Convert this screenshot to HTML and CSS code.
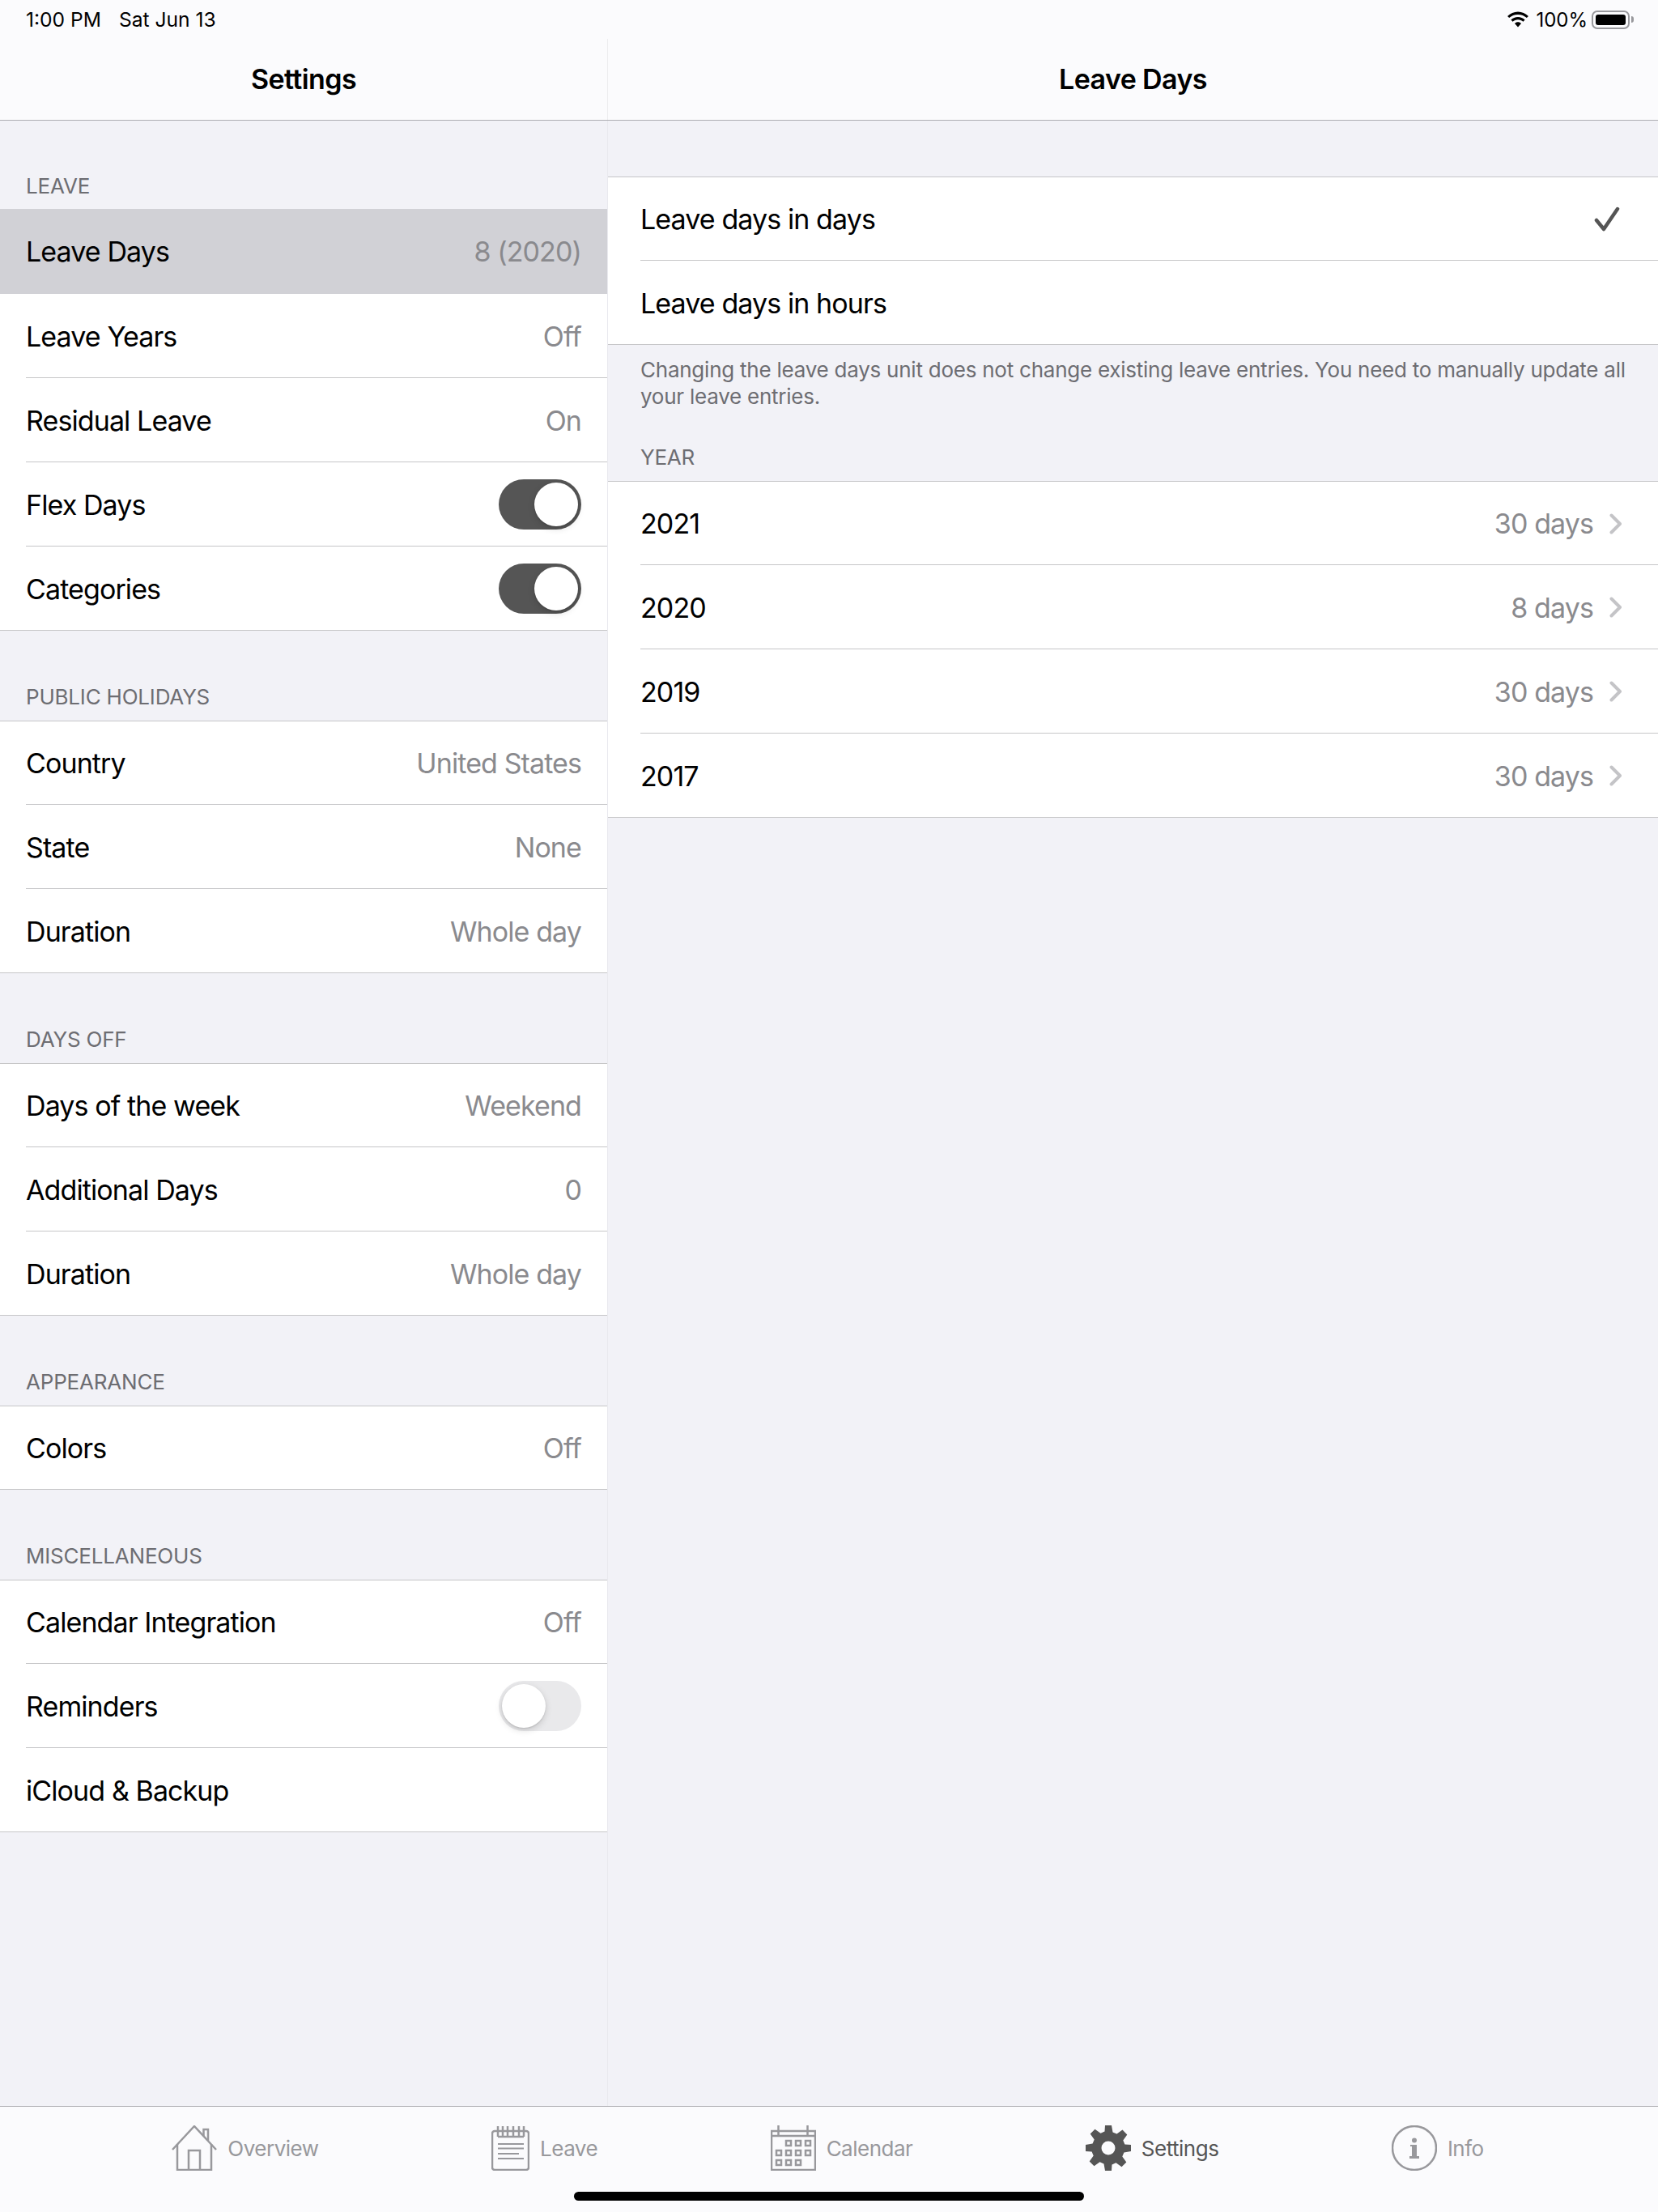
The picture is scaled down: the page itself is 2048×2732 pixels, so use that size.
FILE: index.html
```html
<!DOCTYPE html>
<html lang="en">
<head>
    <meta charset="UTF-8">
    <title>Settings</title>
    <link rel="stylesheet" href="styles.css">
</head>
<body>
    <div id="app">
        <div class="top-bar">
            <div class="status-bar">
                <div class="status-left"><span>1:00 PM</span><span>Sat Jun 13</span></div>
                <div class="status-right">
                    <svg class="wifi" width="28" height="20" viewBox="1 .5 26 19">
                        <path d="M14 4.200c4 0 7.600 1.500 10.300 4l2-2.100C23 3 18.700 1 14 1S5 3 1.700 6.100l2 2.100c2.700-2.500 6.300-4 10.300-4z"/>
                        <path d="M14 10.200c2.400 0 4.500.9 6.100 2.400l2.100-2.100C20 8.400 17.200 7.200 14 7.200s-6 1.200-8.200 3.300l2.100 2.100c1.600-1.500 3.700-2.400 6.100-2.400z"/>
                        <path d="M14 13.200c-1.500 0-2.800.6-3.800 1.500L14 19l3.800-4.300c-1-.9-2.300-1.500-3.800-1.500z"/>
                    </svg>
                    <span>100%</span>
                    <div class="battery"><div class="battery-fill"></div></div>
                    <div class="battery-nub"></div>
                </div>
            </div>
            <div class="nav-row">
                <div class="nav-title nav-left">Settings</div>
                <div class="nav-title nav-right">Leave Days</div>
            </div>
        </div>

        <div class="panes">
            <div class="pane-left">
                <div class="section-head first">LEAVE</div>
                <div class="group">
                    <div class="row selected"><span>Leave Days</span><span class="value">8 (2020)</span></div>
                    <div class="row"><span>Leave Years</span><span class="value">Off</span></div>
                    <div class="row"><span>Residual Leave</span><span class="value">On</span></div>
                    <div class="row"><span>Flex Days</span><div class="switch on"><div class="knob"></div></div></div>
                    <div class="row"><span>Categories</span><div class="switch on"><div class="knob"></div></div></div>
                </div>

                <div class="section-head">PUBLIC HOLIDAYS</div>
                <div class="group">
                    <div class="row"><span>Country</span><span class="value">United States</span></div>
                    <div class="row"><span>State</span><span class="value">None</span></div>
                    <div class="row"><span>Duration</span><span class="value">Whole day</span></div>
                </div>

                <div class="section-head">DAYS OFF</div>
                <div class="group">
                    <div class="row"><span>Days of the week</span><span class="value">Weekend</span></div>
                    <div class="row"><span>Additional Days</span><span class="value">0</span></div>
                    <div class="row"><span>Duration</span><span class="value">Whole day</span></div>
                </div>

                <div class="section-head">APPEARANCE</div>
                <div class="group">
                    <div class="row"><span>Colors</span><span class="value">Off</span></div>
                </div>

                <div class="section-head">MISCELLANEOUS</div>
                <div class="group">
                    <div class="row"><span>Calendar Integration</span><span class="value">Off</span></div>
                    <div class="row"><span>Reminders</span><div class="switch"><div class="knob"></div></div></div>
                    <div class="row"><span>iCloud &amp; Backup</span></div>
                </div>
            </div>

            <div class="pane-right">
                <div class="group first-group">
                    <div class="row">
                        <span>Leave days in days</span>
                        <svg class="check" width="32" height="32" viewBox="0 0 32 32"><path d="M3 17l9 11L29 3"/></svg>
                    </div>
                    <div class="row"><span>Leave days in hours</span></div>
                </div>
                <div class="group-note">Changing the leave days unit does not change existing leave entries. You need to manually update all your leave entries.</div>
                <div class="section-head year-head">YEAR</div>
                <div class="group">
                    <div class="row"><span>2021</span><div class="detail"><span class="value">30 days</span><svg class="chevron" width="16" height="26" viewBox="0 0 16 26"><path d="M2.500 2.500L13 13 2.500 23.500"/></svg></div></div>
                    <div class="row"><span>2020</span><div class="detail"><span class="value">8 days</span><svg class="chevron" width="16" height="26" viewBox="0 0 16 26"><path d="M2.500 2.500L13 13 2.500 23.500"/></svg></div></div>
                    <div class="row"><span>2019</span><div class="detail"><span class="value">30 days</span><svg class="chevron" width="16" height="26" viewBox="0 0 16 26"><path d="M2.500 2.500L13 13 2.500 23.500"/></svg></div></div>
                    <div class="row"><span>2017</span><div class="detail"><span class="value">30 days</span><svg class="chevron" width="16" height="26" viewBox="0 0 16 26"><path d="M2.500 2.500L13 13 2.500 23.500"/></svg></div></div>
                </div>
            </div>
        </div>

        <div class="tab-bar">
            <div class="tabs">
                <div class="tab">
                    <svg class="tab-line" width="56" height="56" viewBox="0 0 56 56">
                        <path d="M1 30L28 1 55 30"/>
                        <path d="M7 23v32h42V23"/>
                        <path d="M21 55V31h14v24"/>
                        <path d="M39.500 13V5H45v14"/>
                    </svg>
                    <span>Overview</span>
                </div>
                <div class="tab">
                    <svg class="tab-line" width="47" height="56" viewBox="0 0 47 56">
                        <rect x="1" y="7" width="45" height="48" rx="3"/>
                        <path d="M8 14h32M8 1v13M14 1v13M20 1v13M27 1v13M34 1v13M40 1v13"/>
                        <path class="thin" d="M8 23h32M8 28.500h32M8 35h26M8 41h32"/>
                    </svg>
                    <span>Leave</span>
                </div>
                <div class="tab">
                    <svg class="tab-line" width="56" height="56" viewBox="0 0 56 56">
                        <rect x="1" y="7" width="54" height="48"/>
                        <path d="M1 13h54M9.500 0v12M45.500 0v12"/>
                        <path d="M19 19h6v6h-6zM31 19h6v6h-6zM43 19h6v6h-6zM7 31h6v6H7zM19 31h6v6h-6zM31 31h6v6h-6zM43 31h6v6h-6zM7 43h6v6H7zM19 43h6v6h-6zM31 43h6v6h-6z"/>
                    </svg>
                    <span>Calendar</span>
                </div>
                <div class="tab active">
                    <svg width="56" height="56" viewBox="0 0 56 56">
                        <path fill-rule="evenodd" d="M24 0h8l1.500 8.500 5 2.100 7-5 5.800 5.800-5 7 2.100 5L56 24v8l-8.600 1.500-2.100 5 5 7-5.800 5.800-7-5-5 2.100L32 56h-8l-1.500-8.600-5-2.100-7 5-5.800-5.800 5-7-2.100-5L0 32v-8l8.600-1.500 2.100-5-5-7 5.800-5.800 7 5 5-2.100L24 0zm4 19.500a8.500 8.500 0 1 0 0 17 8.500 8.500 0 0 0 0-17z"/>
                    </svg>
                    <span>Settings</span>
                </div>
                <div class="tab">
                    <svg class="tab-line" width="56" height="56" viewBox="0 0 56 56">
                        <circle cx="28" cy="28" r="27"/>
                        <circle class="dot" cx="28" cy="18.500" r="3"/>
                        <path class="dot" d="M23 24h8v14h3v3H22v-3h3V26h-2z"/>
                    </svg>
                    <span>Info</span>
                </div>
            </div>
            <div class="home-bar"></div>
        </div>
    </div>
</body>
</html>
```

FILE: styles.css
```css
*{
    padding: 0;
    margin: 0;
    box-sizing: border-box;
}
body{
    font-family: Inter, "Liberation Sans", sans-serif;
    color: #000;
}
#app{
    width: 2048px;
    height: 2732px;
    display: flex;
    flex-direction: column;
    background-color: #f2f2f7;
}

/* top */
.top-bar{
    height: 149px;
    background-color: #fbfbfd;
    border-bottom: 1px solid #aeaeb2;
}
.status-bar{
    height: 48px;
    padding: 0 30px 0 32px;
    display: flex;
    justify-content: space-between;
    align-items: center;
    font-size: 24.600px;
}
.status-left{
    display: flex;
    gap: 22px;
}
.status-right{
    display: flex;
    align-items: center;
    font-size: 24px;
}
.wifi{
    margin-right: 8px;
}
.battery{
    width: 47px;
    height: 23px;
    margin-left: 5px;
    padding: 3px;
    border: 2px solid #98989c;
    border-radius: 7px;
}
.battery-fill{
    height: 100%;
    background-color: #000;
    border-radius: 3px;
}
.battery-nub{
    width: 3px;
    height: 8px;
    margin-left: 2px;
    background-color: #98989c;
    border-radius: 0 3px 3px 0;
}
.nav-row{
    height: 100px;
    display: flex;
}
.nav-title{
    display: flex;
    align-items: center;
    justify-content: center;
    font-size: 34px;
    font-weight: 600;
    letter-spacing: -.6px;
    padding-bottom: 1px;
}
.nav-left{
    width: 751px;
    border-right: 1px solid #ececef;
}
.nav-right{
    flex: 1;
}

/* panes */
.panes{
    flex: 1;
    display: flex;
}
.pane-left{
    width: 751px;
    border-right: 1px solid #e9e9ee;
}
.pane-right{
    flex: 1;
}
.section-head{
    height: 111px;
    padding: 0 32px 13px;
    display: flex;
    align-items: flex-end;
    font-size: 26px;
    line-height: 32px;
    letter-spacing: -.2px;
    color: #6d6d72;
}
.section-head.first{
    height: 109px;
    padding-bottom: 12px;
}
.group{
    background-color: #fff;
    border-top: 1px solid #c6c6c8;
}
.row{
    height: 104px;
    padding: 0 32px;
    display: flex;
    align-items: center;
    justify-content: space-between;
    font-size: 34px;
    letter-spacing: -.9px;
    position: relative;
}
.row:first-child{
    height: 103px;
}
.row::after{
    content: "";
    position: absolute;
    left: 32px;
    right: 0;
    bottom: 0;
    height: 1px;
    background-color: #c6c6c8;
}
.row:last-child::after{
    left: 0;
}
.row.selected{
    background-color: #d1d1d6;
    margin-top: -1px;
    height: 105px;
}
.selected::after{
    display: none;
}
.value{
    color: #8a8a8e;
}
.switch{
    width: 102px;
    height: 62px;
    border-radius: 31px;
    padding: 4px;
    background-color: #e9e9eb;
}
.switch.on{
    background-color: #555;
    display: flex;
    justify-content: flex-end;
}
.knob{
    width: 54px;
    height: 54px;
    border-radius: 50%;
    background-color: #fff;
    box-shadow: 0 3px 8px rgba(0,0,0,.15), 0 1px 2px rgba(0,0,0,.12);
}

/* right pane */
.first-group{
    margin-top: 69px;
}
.pane-right .row{
    padding: 0 44px 0 40px;
}
.pane-right .row::after{
    left: 40px;
}
.pane-right .row:last-child::after{
    left: 0;
}
.check{
    margin-right: 3px;
}
.check path{
    fill: none;
    stroke: #555;
    stroke-width: 4.500;
    stroke-linecap: round;
    stroke-linejoin: round;
}
.group-note{
    padding: 14px 20px 0 40px;
    height: 79px;
    font-size: 26px;
    line-height: 33px;
    letter-spacing: -.24px;
    color: #6d6d72;
}
.section-head.year-head{
    height: 89px;
    padding: 0 40px 13px;
}
.detail{
    display: flex;
    align-items: center;
    gap: 20px;
}
.chevron path{
    fill: none;
    stroke: #c4c4c7;
    stroke-width: 4;
    stroke-linecap: round;
    stroke-linejoin: round;
}

/* tab bar */
.tab-bar{
    height: 131px;
    background-color: #fbfbfd;
    border-top: 1px solid #aeaeb2;
    position: relative;
}
.tabs{
    padding: 23px 3px 0 0;
    display: flex;
    justify-content: center;
    gap: 213.500px;
}
.tab{
    display: flex;
    align-items: center;
    gap: 13px;
    font-size: 26px;
    letter-spacing: -.5px;
    color: #98989c;
}
.tab svg{
    display: block;
}
.tab-line *{
    fill: none;
    stroke: #98989c;
    stroke-width: 2.500;
}
.tab-line .thin{
    stroke-width: 2;
}
.tab-line .dot{
    fill: #98989c;
    stroke: none;
}
.tab.active{
    color: #555;
    fill: #555;
}
.home-bar{
    position: absolute;
    left: 709px;
    top: 105px;
    width: 630px;
    height: 11px;
    border-radius: 6px;
    background-color: #000;
}
```
